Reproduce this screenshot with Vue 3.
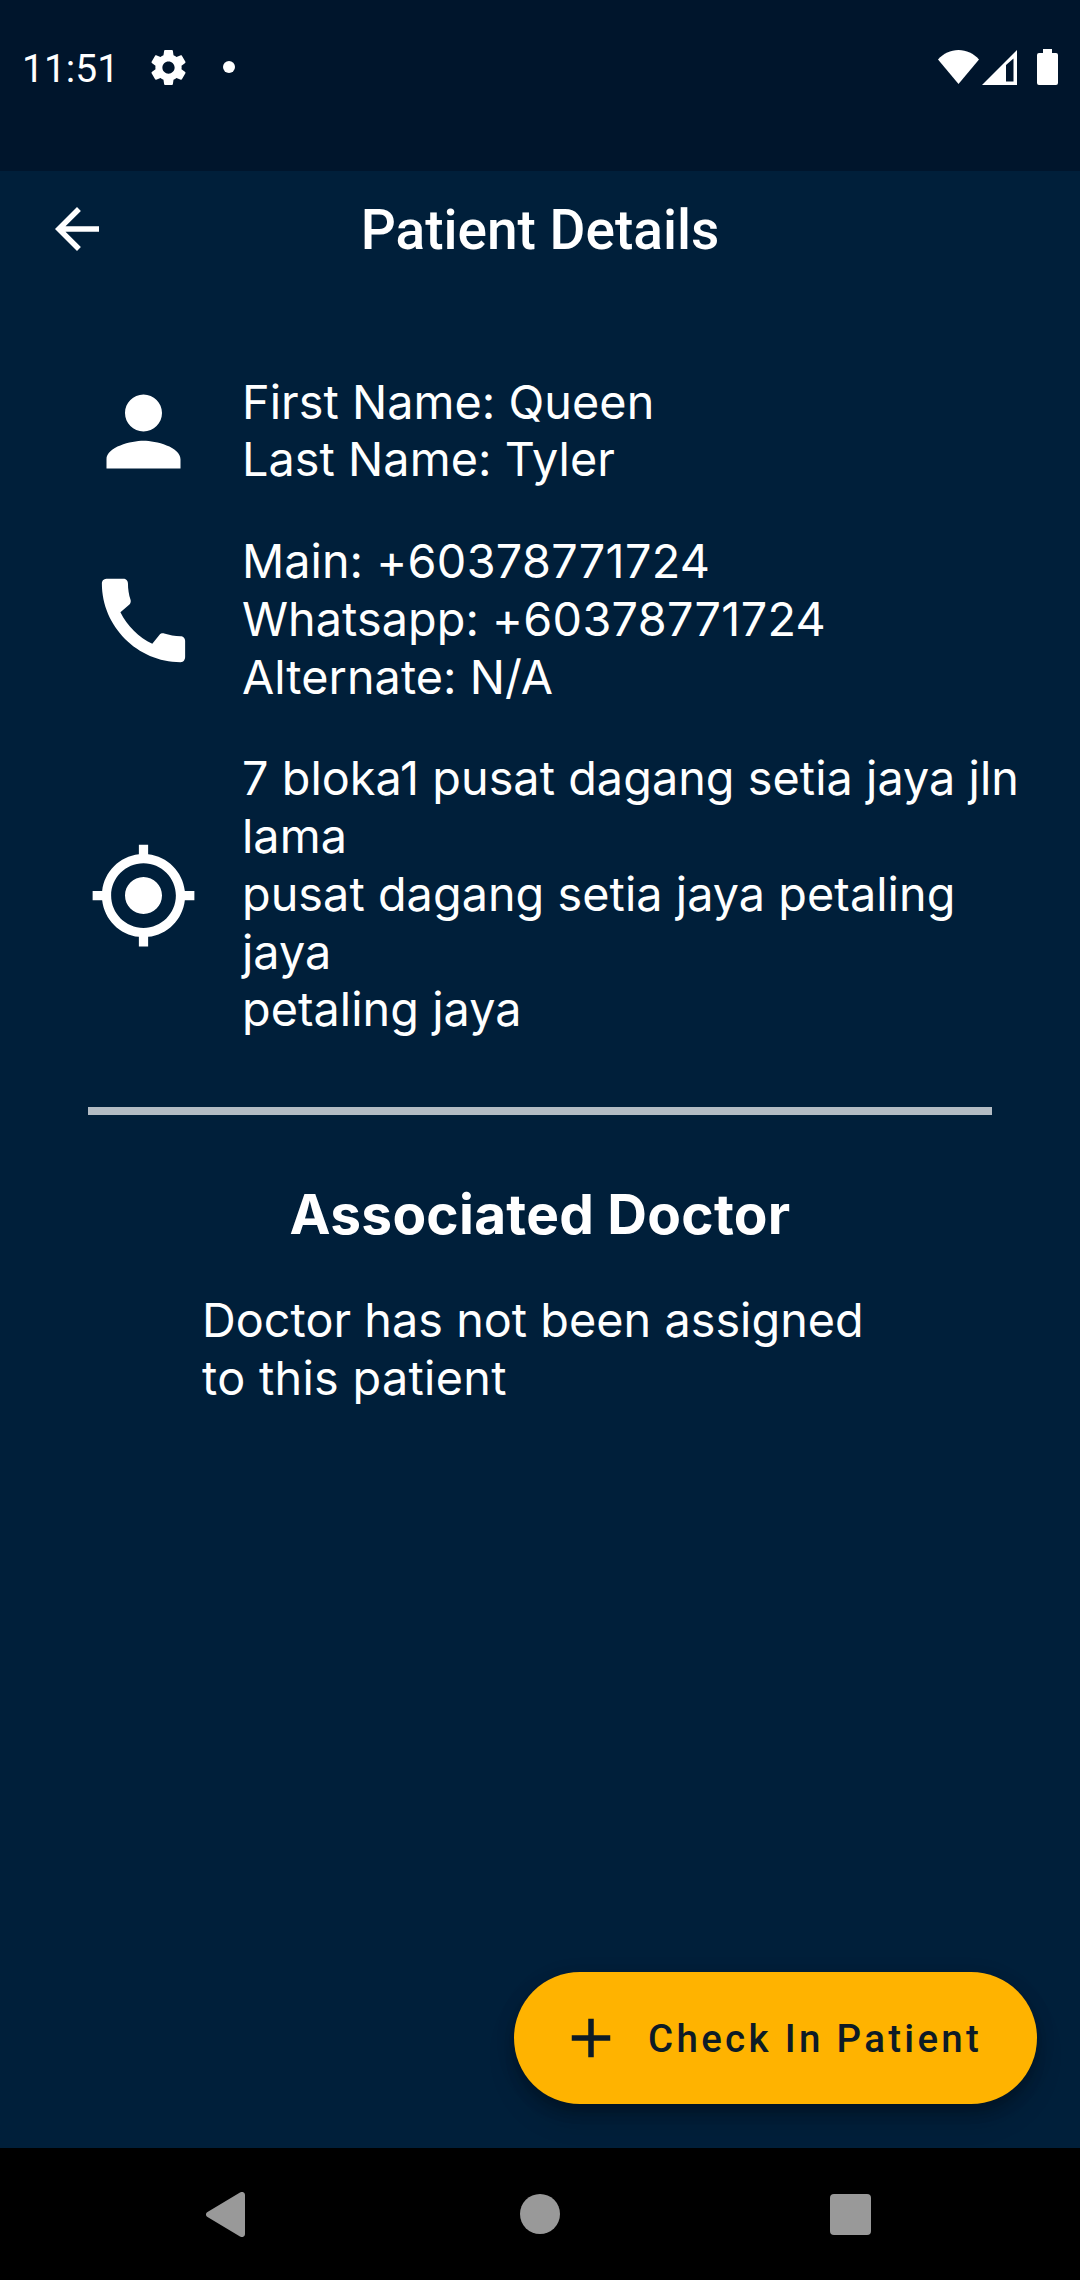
<script setup>
const patient = [
  {
    icon: 'M12 12c2.21 0 4-1.79 4-4s-1.79-4-4-4-4 1.79-4 4 1.79 4 4 4zm0 2c-2.67 0-8 1.34-8 4v2h16v-2c0-2.66-5.33-4-8-4z',
    lines: [{ text: 'First Name: Queen' }, { text: 'Last Name: Tyler' }],
  },
  {
    icon: 'M20.01 15.38c-1.23 0-2.42-.2-3.53-.56-.35-.12-.74-.03-1.01.24l-1.57 1.97c-2.83-1.35-5.48-3.9-6.89-6.83l1.95-1.66c.27-.28.35-.67.24-1.02-.37-1.11-.56-2.3-.56-3.53 0-.54-.45-.99-.99-.99H4.19C3.65 3 3 3.24 3 3.99 3 13.28 10.73 21 20.01 21c.71 0 .99-.63.99-1.18v-3.45c0-.54-.45-.99-.99-.99z',
    lines: [
      { text: 'Main: ', number: '+60378771724' },
      { text: 'Whatsapp: ', number: '+60378771724' },
      { text: 'Alternate: N/A' },
    ],
  },
  {
    icon: 'M12 8c-2.21 0-4 1.79-4 4s1.79 4 4 4 4-1.79 4-4-1.79-4-4-4zm8.94 3c-.46-4.17-3.77-7.48-7.94-7.94V1h-2v2.06C6.83 3.52 3.52 6.83 3.06 11H1v2h2.06c.46 4.17 3.77 7.48 7.94 7.94V23h2v-2.06c4.17-.46 7.48-3.77 7.94-7.94H23v-2h-2.06zM12 19c-3.87 0-7-3.13-7-7s3.13-7 7-7 7 3.13 7 7-3.13 7-7 7z',
    lines: [
      { text: '7 bloka1 pusat dagang setia jaya jln lama' },
      { text: 'pusat dagang setia jaya petaling jaya' },
      { text: 'petaling jaya' },
    ],
  },
]
</script>

<template>
  <div class="screen">
    <header class="status">
      <span class="time">11:51</span>
      <svg class="gear" viewBox="2 2 20 20"><path d="M19.430 12.980c.04-.32.07-.64.07-.98s-.03-.66-.07-.98l2.110-1.650c.19-.15.24-.42.12-.64l-2-3.460c-.12-.22-.39-.3-.61-.22l-2.490 1c-.52-.4-1.080-.73-1.690-.98l-.38-2.650C14.460 2.180 14.250 2 14 2h-4c-.25 0-.46.18-.49.42l-.38 2.650c-.61.25-1.170.59-1.690.98l-2.490-1c-.23-.09-.49 0-.61.22l-2 3.460c-.13.22-.07.49.12.64l2.110 1.650c-.04.32-.07.65-.07.98s.03.66.07.98l-2.110 1.650c-.19.15-.24.42-.12.64l2 3.460c.12.22.39.3.61.22l2.490-1c.52.4 1.080.73 1.690.98l.38 2.650c.03.24.24.42.49.42h4c.25 0 .46-.18.49-.42l.38-2.650c.61-.25 1.170-.59 1.690-.98l2.490 1c.23.09.49 0 .61-.22l2-3.460c.12-.22.07-.49-.12-.64l-2.110-1.650zM12 15.500c-1.930 0-3.500-1.570-3.500-3.500s1.570-3.500 3.500-3.500 3.500 1.570 3.500 3.500-1.570 3.500-3.500 3.500z" /></svg>
      <i class="dot"></i>
      <svg class="wifi" viewBox="0 0 41 34"><path d="M20.5 34 0 9.5C5.5 3.5 12.5 0 20.5 0S35.500 3.500 41 9.500z" /></svg>
      <svg class="signal" viewBox="0 0 35 35"><path fill-rule="evenodd" d="M0 35 35 0v35zM24 15v16.500h7.500V8.500z" /></svg>
      <svg class="battery" viewBox="0 0 21 36"><path d="M6 0h9v4h4a2 2 0 0 1 2 2v28a2 2 0 0 1-2 2H2a2 2 0 0 1-2-2V6a2 2 0 0 1 2-2h4z" /></svg>
    </header>

    <nav class="appbar">
      <svg class="back" viewBox="4 4 16 16"><path d="M20 11H7.830l5.590-5.590L12 4l-8 8 8 8 1.410-1.410L7.830 13H20v-2z" /></svg>
      <h1>Patient Details</h1>
    </nav>

    <main class="content">
      <section class="details">
        <div v-for="row in patient" :key="row.icon" class="row">
          <svg class="row-icon" viewBox="0 0 24 24"><path :d="row.icon" /></svg>
          <div class="row-text">
            <p v-for="line in row.lines" :key="line.text">{{ line.text }}<span v-if="line.number" class="number">{{ line.number }}</span></p>
          </div>
        </div>
      </section>
      <div class="divider"></div>
      <h2>Associated Doctor</h2>
      <p class="doctor">Doctor has not been assigned<br><span class="number">to this patient</span></p>
      <button class="fab">
        <svg viewBox="0 0 24 24"><path d="M19 13h-6v6h-2v-6H5v-2h6V5h2v6h6v2z" /></svg>
        <span>Check In Patient</span>
      </button>
    </main>

    <footer class="navbar">
      <svg class="nav-back" viewBox="0 0 39 45"><path d="M34 .5C36.500-1 39 .5 39 3v39c0 2.500-2.500 4-5 2.500L1.500 25c-2-1.200-2-3.800 0-5z" /></svg>
      <i class="nav-home"></i>
      <i class="nav-recent"></i>
    </footer>
  </div>
</template>

<style>
body {
  margin: 0;
  background: #001f3a;
}
</style>

<style scoped>
.screen {
  width: 1080px;
  height: 2280px;
  display: flex;
  flex-direction: column;
  overflow: hidden;
  background: #001f3a;
  color: #fff;
}
svg {
  display: block;
  flex: none;
  fill: currentColor;
}
h1,
h2,
p {
  margin: 0;
}
.status {
  height: 171px;
  padding: 0 22px;
  box-sizing: border-box;
  display: flex;
  align-items: flex-start;
  background: #00152c;
}
.time {
  width: 129px;
  margin-top: 47px;
  font: 400 39px/45px Roboto, sans-serif;
  white-space: nowrap;
}
.gear {
  width: 35px;
  height: 35px;
  margin-top: 50px;
}
.dot {
  width: 12px;
  height: 12px;
  margin: 61px auto 0 37px;
  border-radius: 50%;
  background: #fff;
}
.wifi {
  width: 41px;
  height: 34px;
  margin: 50px 3px 0 0;
}
.signal {
  width: 35px;
  height: 35px;
  margin: 50px 20px 0 0;
}
.battery {
  width: 21px;
  height: 36px;
  margin-top: 49px;
}
.appbar {
  height: 116px;
  padding: 0 55px;
  display: flex;
  align-items: center;
}
.back {
  width: 44px;
  height: 44px;
}
h1 {
  flex: 1;
  margin-right: 44px;
  padding-top: 2px;
  text-align: center;
  font: 500 55px/64px Roboto, sans-serif;
}
.content {
  flex: 1;
  display: flex;
  flex-direction: column;
  padding-top: 86.500px;
  font-family: Inter, sans-serif;
}
.details {
  display: flex;
  flex-direction: column;
  gap: 44px;
  padding: 0 44px 0 87.500px;
  font-size: 46.750px;
  line-height: 57.750px;
  letter-spacing: 0.050px;
}
.number {
  letter-spacing: 0.300px;
}
.row {
  display: flex;
  align-items: center;
  gap: 43.500px;
}
.row-icon {
  width: 111px;
  height: 111px;
  margin-top: 1px;
}
.row-text {
  flex: 1;
}
.divider {
  height: 8px;
  margin: 67.500px 88px 0;
  background: #b3bcc4;
}
h2 {
  margin-top: 65px;
  text-align: center;
  font-size: 55px;
  line-height: 68px;
  font-weight: 700;
  letter-spacing: 0.250px;
}
.doctor {
  margin: 44.500px 0 0 202px;
  font-size: 46.750px;
  line-height: 57.750px;
  letter-spacing: 0.030px;
}
.fab {
  width: 523px;
  height: 132px;
  margin: auto 43px 44px auto;
  padding: 0 0 0 44px;
  display: flex;
  align-items: center;
  gap: 24px;
  border: 0;
  border-radius: 66px;
  background: #ffb300;
  color: #0d1b26;
  box-shadow: 0 10px 14px -3px rgba(0, 0, 0, 0.200), 0 17px 28px rgba(0, 0, 0, 0.140), 0 3px 20px rgba(0, 0, 0, 0.120);
  font: 500 38.500px/45px Roboto, sans-serif;
  letter-spacing: 3.300px;
  white-space: nowrap;
}
.fab svg {
  width: 66px;
  height: 66px;
}
.navbar {
  height: 132px;
  padding: 0 209px 0 206px;
  display: flex;
  align-items: center;
  justify-content: space-between;
  background: #000;
  color: #999;
}
.nav-back {
  width: 39px;
  height: 45px;
}
.nav-home {
  width: 40px;
  height: 40px;
  margin-left: 4px;
  border-radius: 50%;
  background: #999;
}
.nav-recent {
  width: 41px;
  height: 41px;
  border-radius: 4px;
  background: #999;
}
</style>
